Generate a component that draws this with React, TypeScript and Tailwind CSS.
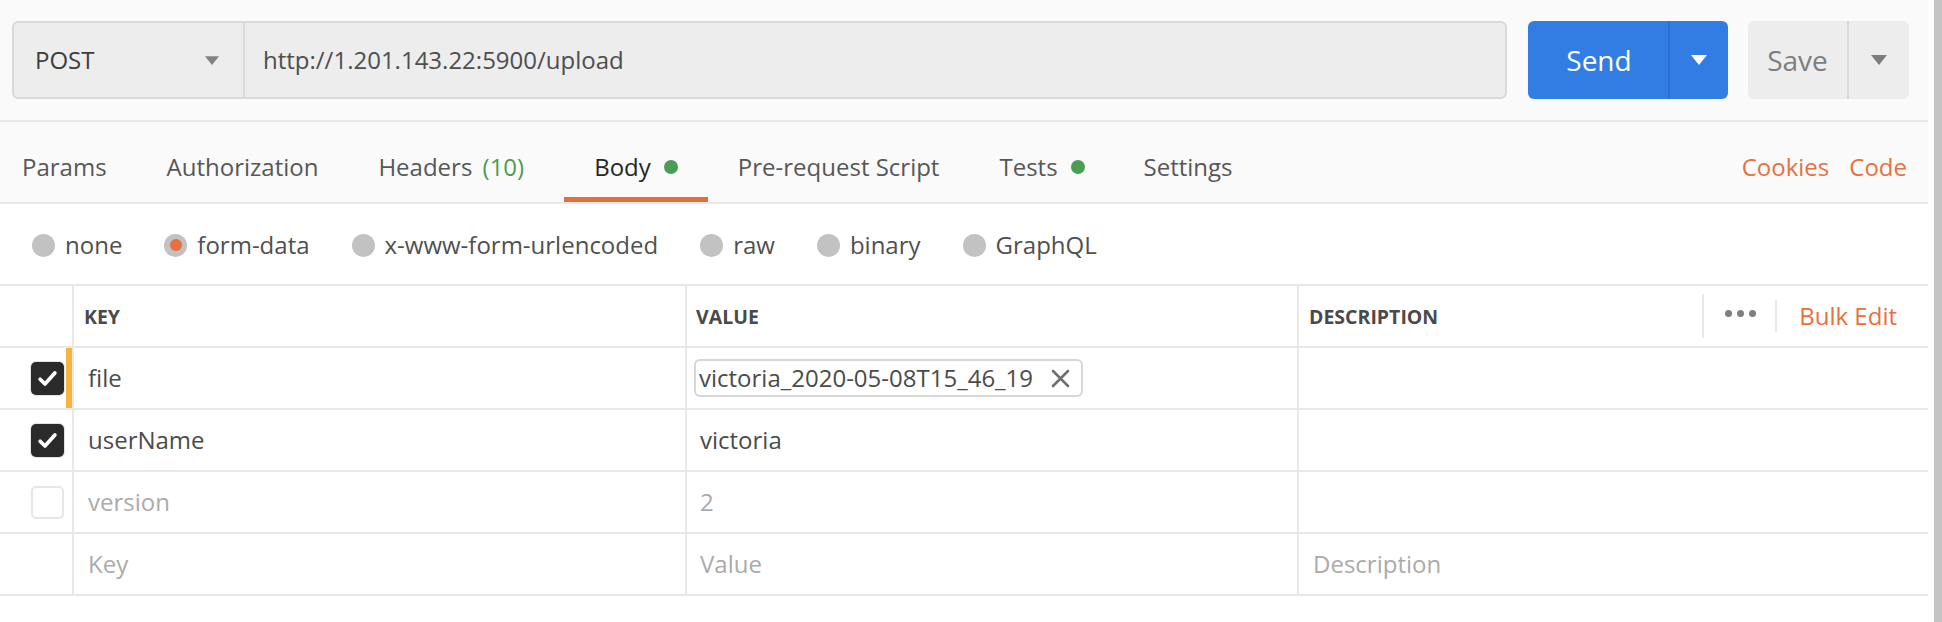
import React from "react";

const font = { fontFamily: '"Open Sans", "Liberation Sans", sans-serif' };

const Caret = ({ className }: { className?: string }) => (
    <svg width="16" height="10" viewBox="0 0 16 10" className={className}>
        <path d="M0 0h16L8 10z" fill="currentColor" />
    </svg>
);

const Check = () => (
    <svg width="23" height="23" viewBox="0 0 20 20">
        <path d="M3.6 10.6l4.2 4.2 8.6-9.6" fill="none" stroke="#fff" strokeWidth="3.2" strokeLinecap="round" strokeLinejoin="round" />
    </svg>
);

interface TabProps {
    label: string;
    count?: string;
    dot?: boolean;
    active?: boolean;
    pad: string;
}

const Tab = ({ label, count, dot, active, pad }: TabProps) => (
    <div className={`relative flex items-center h-full ${pad}`}>
        <span className={`text-[24px] leading-[32px] mt-[10px] ${active ? "text-[#262626]" : "text-[#575757]"}`}>
            {label}
            {count && <span className="ml-[4px] text-[#4a9d54]"> {count}</span>}
        </span>
        {dot && <span className="ml-[13px] mt-[10px] w-[14px] h-[14px] rounded-full bg-[#4a9d54]" />}
        {active && <span className="absolute left-0 right-0 bottom-0 h-[5px] bg-[#e36f3f]" />}
    </div>
);

const Radio = ({ label, selected }: { label: string; selected?: boolean }) => (
    <div className="flex items-center">
        <span className="w-[23px] h-[23px] rounded-full bg-[#c2c2c2] flex items-center justify-center">
            {selected && <span className="w-[12px] h-[12px] rounded-full bg-[#e8703e]" />}
        </span>
        <span className="ml-[10px] text-[24px] text-[#505050]">{label}</span>
    </div>
);

type RowKind = "checked" | "unchecked" | "empty";

interface RowProps {
    kind: RowKind;
    keyText: string;
    value: React.ReactNode;
    desc?: string;
    muted?: boolean;
    marker?: boolean;
}

const Row = ({ kind, keyText, value, desc, muted, marker }: RowProps) => {
    const tone = muted ? "text-[#ababab]" : "text-[#4b4b4b]";
    return (
        <div className="flex h-[62px] border-b-2 border-[#e8e8e8]">
            <div className="relative w-[74px] border-r-2 border-[#e8e8e8] flex items-center justify-end pr-[8px]">
                {kind === "checked" && (
                    <span className="w-[33px] h-[33px] rounded-[5px] bg-[#2a2a2a] ring-1 ring-[#e2e2e2] flex items-center justify-center">
                        <Check />
                    </span>
                )}
                {kind === "unchecked" && (
                    <span className="w-[33px] h-[33px] rounded-[5px] border-2 border-[#e6e6e6] bg-white" />
                )}
                {marker && <span className="absolute right-0 top-0 bottom-0 w-[6px] bg-[#f4b63f]" />}
            </div>
            <div className={`w-[613px] border-r-2 border-[#e8e8e8] flex items-center pl-[14px] text-[24px] ${tone}`}>
                {keyText}
            </div>
            <div className={`w-[612px] border-r-2 border-[#e8e8e8] flex items-center pl-[13px] text-[24px] ${tone}`}>
                {value}
            </div>
            <div className="flex-1 flex items-center pl-[14px] text-[24px] text-[#ababab]">{desc}</div>
        </div>
    );
};

export default function App() {
    return (
        <div className="w-[1942px] h-[622px] flex bg-white overflow-hidden" style={font}>
            <div className="flex-1 flex flex-col">
                {/* request bar */}
                <div className="h-[122px] bg-[#fafafa] border-b-2 border-[#e8e8e8] flex items-center pl-[12px] pr-[19px]">
                    <div className="flex-1 h-[78px] flex rounded-[6px] border-2 border-[#d9d9d9] bg-[#ededed]">
                        <div className="w-[231px] border-r-2 border-[#d9d9d9] flex items-center justify-between pl-[21px] pr-[24px]">
                            <span className="text-[24px] text-[#3d3d3d]">POST</span>
                            <Caret className="text-[#828282] w-[14px] h-[9px]" />
                        </div>
                        <div className="flex-1 flex items-center pl-[18px] text-[24px] text-[#4e4e4e]">
                            http://1.201.143.22:5900/upload
                        </div>
                    </div>
                    <div className="ml-[21px] w-[200px] h-[78px] flex rounded-[6px] bg-[#327de4] text-white">
                        <div className="w-[140px] flex items-center justify-center pl-[2px] text-[28px]">Send</div>
                        <div className="w-[2px] bg-[#2b70d2]" />
                        <div className="flex-1 flex items-center justify-center">
                            <Caret />
                        </div>
                    </div>
                    <div className="ml-[20px] w-[161px] h-[78px] flex rounded-[6px] bg-[#ededed] text-[#7d7d7d]">
                        <div className="w-[99px] flex items-center justify-center text-[28px]">Save</div>
                        <div className="w-[2px] bg-[#dadada]" />
                        <div className="flex-1 flex items-center justify-center">
                            <Caret />
                        </div>
                    </div>
                </div>

                {/* tabs */}
                <div className="h-[82px] bg-[#fafafa] border-b-2 border-[#e8e8e8] flex justify-between">
                    <div className="flex">
                        <Tab label="Params" pad="pl-[22px] pr-[30px]" />
                        <Tab label="Authorization" pad="px-[30px]" />
                        <Tab label="Headers" count="(10)" pad="pl-[30px] pr-[40px]" />
                        <Tab label="Body" dot active pad="px-[30px]" />
                        <Tab label="Pre-request Script" pad="px-[30px]" />
                        <Tab label="Tests" dot pad="pl-[30px] pr-[29px]" />
                        <Tab label="Settings" pad="px-[30px]" />
                    </div>
                    <div className="flex items-center gap-[20px] pr-[21px] pt-[10px] text-[24px] text-[#e8703e]">
                        <span>Cookies</span>
                        <span>Code</span>
                    </div>
                </div>

                {/* body types */}
                <div className="h-[82px] border-b-2 border-[#e8e8e8] flex items-center pl-[32px] pt-[2px] gap-[42px]">
                    <Radio label="none" />
                    <Radio label="form-data" selected />
                    <Radio label="x-www-form-urlencoded" />
                    <Radio label="raw" />
                    <Radio label="binary" />
                    <Radio label="GraphQL" />
                </div>

                {/* table header */}
                <div className="flex h-[62px] border-b-2 border-[#e8e8e8] text-[19.5px] font-bold text-[#4a4a4a]">
                    <div className="w-[74px] border-r-2 border-[#e8e8e8]" />
                    <div className="w-[613px] border-r-2 border-[#e8e8e8] flex items-center pl-[10px] pt-[2px]">KEY</div>
                    <div className="w-[612px] border-r-2 border-[#e8e8e8] flex items-center pl-[9px] pt-[2px]">VALUE</div>
                    <div className="flex-1 flex items-center pl-[10px]">
                        <span className="flex-1 pt-[2px]">DESCRIPTION</span>
                        <div className="self-stretch my-[8px] w-[2px] bg-[#e8e8e8]" />
                        <div className="flex gap-[5px] ml-[21px] mr-[19px] mb-[6px]">
                            <span className="w-[7px] h-[7px] rounded-full bg-[#7e7e7e]" />
                            <span className="w-[7px] h-[7px] rounded-full bg-[#7e7e7e]" />
                            <span className="w-[7px] h-[7px] rounded-full bg-[#7e7e7e]" />
                        </div>
                        <div className="self-stretch my-[14px] w-[2px] bg-[#e8e8e8]" />
                        <span className="ml-[22px] mr-[31px] text-[24px] font-normal text-[#e8703e]">Bulk Edit</span>
                    </div>
                </div>

                <Row
                    kind="checked"
                    marker
                    keyText="file"
                    value={
                        <span className="h-[38px] -ml-[6px] pl-[3px] pr-[11px] flex items-center gap-[18px] rounded-[6px] border-2 border-[#d6d6d6]">
                            victoria_2020-05-08T15_46_19
                            <svg width="19" height="19" viewBox="0 0 19 19">
                                <path d="M2 2l15 15M17 2L2 17" stroke="#6f6f6f" strokeWidth="2.6" strokeLinecap="round" />
                            </svg>
                        </span>
                    }
                />
                <Row kind="checked" keyText="userName" value="victoria" />
                <Row kind="unchecked" keyText="version" value="2" muted />
                <Row kind="empty" keyText="Key" value="Value" desc="Description" muted />
            </div>
            <div className="w-[6px] bg-white" />
            <div className="w-[8px] bg-[#c4c4c4]" />
        </div>
    );
}
